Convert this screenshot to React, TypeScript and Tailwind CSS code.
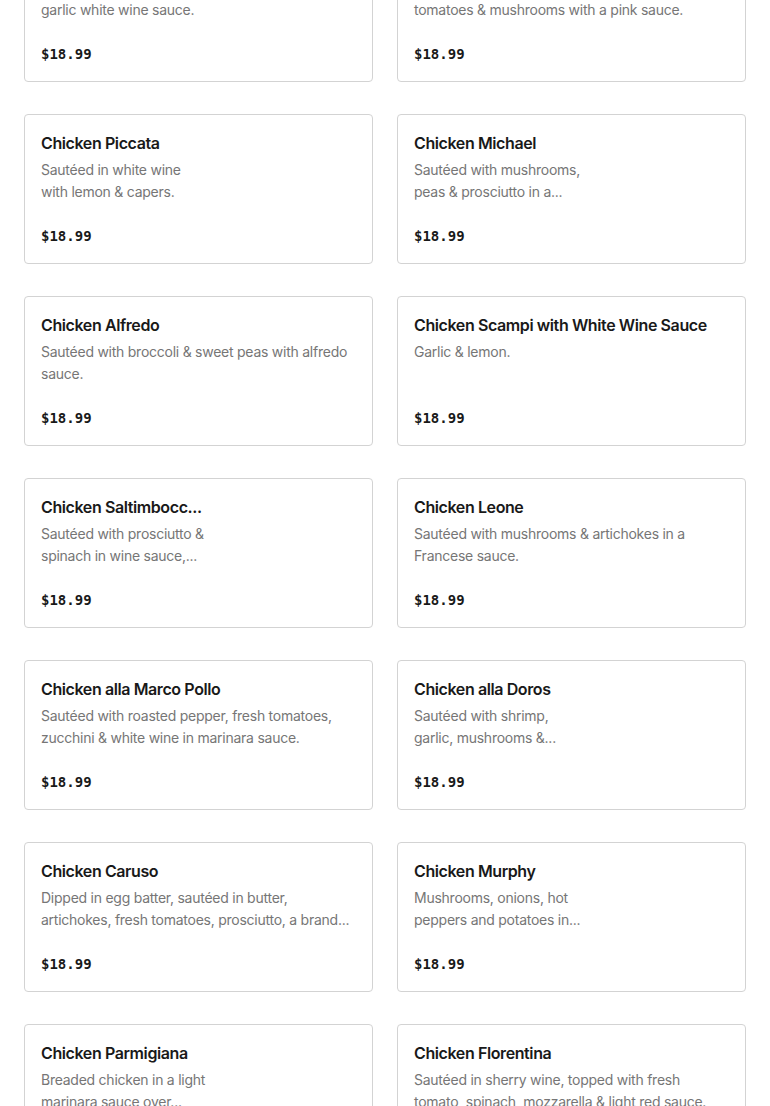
import React from "react";

type Item = { title: string; lines: string[] };

const rows: [Item, Item][] = [
  [
    { title: "Chicken Francese", lines: ["Dipped in egg batter & sautéed in a lemon", "garlic white wine sauce."] },
    { title: "Chicken Rosa", lines: ["Sautéed with prosciutto, sun-dried", "tomatoes & mushrooms with a pink sauce."] },
  ],
  [
    { title: "Chicken Piccata", lines: ["Sautéed in white wine", "with lemon & capers."] },
    { title: "Chicken Michael", lines: ["Sautéed with mushrooms,", "peas & prosciutto in a..."] },
  ],
  [
    { title: "Chicken Alfredo", lines: ["Sautéed with broccoli & sweet peas with alfredo", "sauce."] },
    { title: "Chicken Scampi with White Wine Sauce", lines: ["Garlic & lemon."] },
  ],
  [
    { title: "Chicken Saltimbocc...", lines: ["Sautéed with prosciutto &", "spinach in wine sauce,..."] },
    { title: "Chicken Leone", lines: ["Sautéed with mushrooms & artichokes in a", "Francese sauce."] },
  ],
  [
    { title: "Chicken alla Marco Pollo", lines: ["Sautéed with roasted pepper, fresh tomatoes,", "zucchini & white wine in marinara sauce."] },
    { title: "Chicken alla Doros", lines: ["Sautéed with shrimp,", "garlic, mushrooms &..."] },
  ],
  [
    { title: "Chicken Caruso", lines: ["Dipped in egg batter, sautéed in butter,", "artichokes, fresh tomatoes, prosciutto, a brand..."] },
    { title: "Chicken Murphy", lines: ["Mushrooms, onions, hot", "peppers and potatoes in..."] },
  ],
  [
    { title: "Chicken Parmigiana", lines: ["Breaded chicken in a light", "marinara sauce over..."] },
    { title: "Chicken Florentina", lines: ["Sautéed in sherry wine, topped with fresh", "tomato, spinach, mozzarella & light red sauce."] },
  ],
];

function Card({ item }: { item: Item }) {
  return (
    <div className="h-[150px] rounded-[4px] border border-[#d3d3d3] bg-white px-4 pt-[17px] flex flex-col">
      <div
        className="text-[16px] leading-[22px] font-semibold text-[#191919] whitespace-nowrap overflow-hidden"
        style={{ fontFamily: "Inter, 'Noto Sans', sans-serif", letterSpacing: "-0.4px" }}
      >
        {item.title}
      </div>
      <div
        className="mt-[5px] h-[44px] text-[14px] leading-[22px] text-[#767676]"
        style={{ fontFamily: "Inter, 'Noto Sans', sans-serif", letterSpacing: "-0.25px" }}
      >
        {item.lines.map((l, i) => (
          <div key={i} className="whitespace-nowrap">
            {l}
          </div>
        ))}
      </div>
      <div
        className="mt-[23px] text-[14px] leading-[20px] font-bold text-[#191919]"
        style={{ fontFamily: "'DejaVu Sans Mono', 'Liberation Mono', monospace" }}
      >
        $18.99
      </div>
    </div>
  );
}

export default function App() {
  return (
    <div className="h-[1106px] overflow-hidden bg-white">
      <div className="mt-[-68px] px-6 grid grid-cols-2 gap-x-6 gap-y-8">
        {rows.map((r, i) => (
          <React.Fragment key={i}>
            <Card item={r[0]} />
            <Card item={r[1]} />
          </React.Fragment>
        ))}
      </div>
    </div>
  );
}
